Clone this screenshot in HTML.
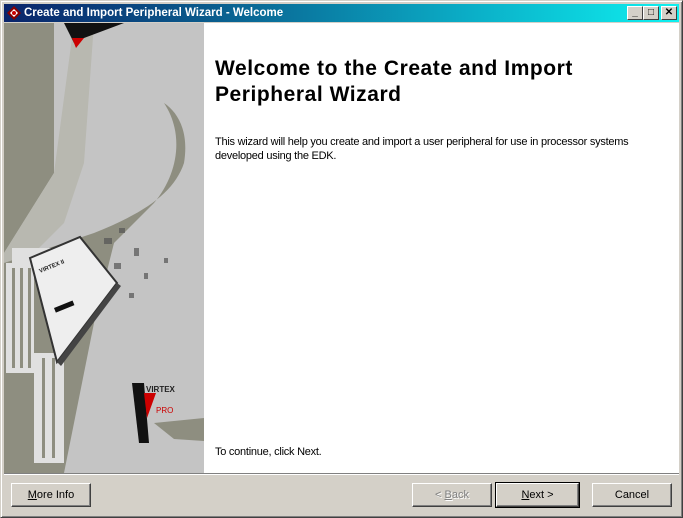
<!DOCTYPE html>
<html><head><style>
*{margin:0;padding:0;box-sizing:border-box}
body{width:683px;height:518px;background:#d4d0c8;font-family:"Liberation Sans",sans-serif;position:relative;overflow:hidden}
.win{position:absolute;left:0;top:0;width:683px;height:518px;border:1px solid;border-color:#d4d0c8 #404040 #404040 #d4d0c8;box-shadow:inset 1px 1px 0 #fff,inset -1px -1px 0 #808080}
.tb{position:absolute;left:4px;top:4px;width:675px;height:18px;background:linear-gradient(90deg,#0a246a,#0a5b8c 30%,#0bb0c8 70%,#0ef0f0);color:#fff;font-weight:bold;font-size:11.5px;line-height:18px;padding-left:20px}
.tb .ic{position:absolute;left:3px;top:2px;width:14px;height:14px}
.cb{position:absolute;top:2px;width:16px;height:14px;background:#d4d0c8;border:1px solid;border-color:#fff #404040 #404040 #fff;color:#000;font-size:10px;line-height:12px;text-align:center}
.content{position:absolute;left:4px;top:23px;width:675px;height:450px;background:#fff}
.sep{position:absolute;left:4px;top:473px;width:675px;height:2px;border-top:1px solid #808080;border-bottom:1px solid #fff}
.btn{position:absolute;top:483px;height:24px;border:1px solid;border-color:#fff #404040 #404040 #fff;box-shadow:inset -1px -1px 0 #808080;font-size:11px;text-align:center;line-height:22px;color:#000}
h1{position:absolute;left:215px;top:56px;font-size:21px;line-height:26px;font-weight:bold;color:#000;letter-spacing:0.55px}
.p{position:absolute;left:215px;font-size:11px;line-height:14px;color:#000;letter-spacing:-0.25px}
</style></head><body>
<div class="win"></div>
<div class="tb"><svg class="ic" viewBox="0 0 14 14"><polygon points="7,0 14,7 7,14 0,7" fill="#800"/><polygon points="7,3 11,7 7,11 3,7" fill="#fff"/><circle cx="7" cy="7" r="2" fill="#c00"/></svg>Create and Import Peripheral Wizard - Welcome
<div class="cb" style="left:623px">_</div><div class="cb" style="left:639px">□</div><div class="cb" style="left:657px;font-weight:bold">✕</div></div>
<div class="content">
<svg width="200" height="450" viewBox="0 0 200 450" style="position:absolute;left:0;top:0">
<rect width="200" height="450" fill="#c4c4c4"/>
<polygon points="0,0 50,0 50,150 0,230" fill="#8e8e80"/>
<polygon points="0,230 50,150 70,0 90,0 80,140 60,200 0,260" fill="#b8b8b0"/>
<path d="M0,240 L90,210 C140,190 170,170 180,140 C185,110 175,90 160,80 C180,110 175,150 150,180 L110,220 L90,300 L60,450 L0,450 Z" fill="#8e8e80"/>
<polygon points="60,0 120,0 80,15 70,20" fill="#111"/>
<polygon points="68,15 80,15 72,25" fill="#c00"/>
<g fill="#e0e0e0"><rect x="2" y="240" width="28" height="110"/><rect x="30" y="330" width="30" height="110"/><rect x="8" y="225" width="40" height="15"/></g>
<g fill="#8e8e80"><rect x="8" y="245" width="3" height="100"/><rect x="16" y="245" width="3" height="100"/><rect x="24" y="245" width="3" height="100"/><rect x="38" y="335" width="3" height="100"/><rect x="48" y="335" width="3" height="100"/></g>
<g fill="#555" opacity="0.7"><rect x="100" y="215" width="8" height="6"/><rect x="115" y="205" width="6" height="5"/><rect x="130" y="225" width="5" height="8"/><rect x="110" y="240" width="7" height="6"/><rect x="140" y="250" width="4" height="6"/><rect x="125" y="270" width="5" height="5"/><rect x="160" y="235" width="4" height="5"/></g>
<polygon points="26,235 76,214 113,260 53,339" fill="#eeeeee" stroke="#333" stroke-width="2"/>
<polygon points="113,260 117,263 57,343 53,339" fill="#444"/>
<text x="36" y="250" font-size="6" font-weight="bold" fill="#222" font-family="Liberation Sans" transform="rotate(-22 36 250)">VIRTEX II</text>
<rect x="50" y="285" width="20" height="5" fill="#111" transform="rotate(-22 50 285)"/>
<polygon points="128,360 140,360 145,420 135,420" fill="#111"/>
<polygon points="140,370 152,370 143,395" fill="#c00"/>
<text x="142" y="369" font-size="8" font-weight="bold" fill="#222" font-family="Liberation Sans">VIRTEX</text>
<text x="152" y="390" font-size="8" fill="#c00" font-family="Liberation Sans">PRO</text>
<polygon points="150,400 200,395 200,418 170,416" fill="#8e8e80"/>
</svg>
</div>
<h1>Welcome to the Create and Import<br>Peripheral Wizard</h1>
<div class="p" style="top:135px">This wizard will help you create and import a user peripheral for use in processor systems<br>developed using the EDK.</div>
<div class="p" style="top:445px">To continue, click Next.</div>
<div class="sep"></div>
<div class="btn" style="left:11px;width:80px"><u>M</u>ore Info</div>
<div class="btn" style="left:412px;width:80px;color:#808080;text-shadow:1px 1px 0 #fff">&lt; <u>B</u>ack</div>
<div class="btn" style="left:496px;width:83px;outline:1px solid #000"><u>N</u>ext &gt;</div>
<div class="btn" style="left:592px;width:80px">Cancel</div>
</body></html>
